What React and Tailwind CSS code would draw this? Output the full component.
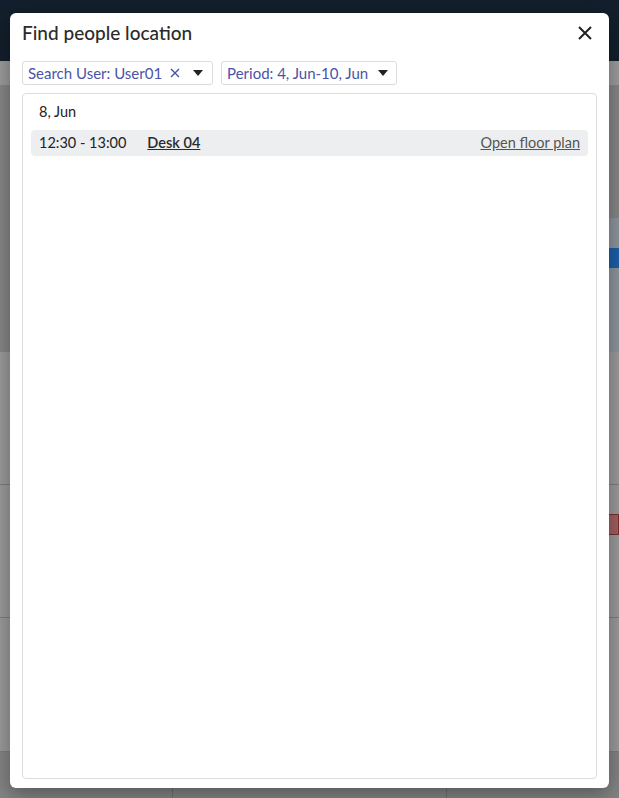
import React from "react";

function Caret() {
  return (
    <svg className="w-[10px] h-[6px]" viewBox="0 0 10 6">
      <path d="M0 0h10L5 6z" fill="#222" />
    </svg>
  );
}

function Chip({ label, clearable }) {
  return (
    <div className="flex items-center h-[24px] pl-[5px] pr-[4px] border border-[#dcdcdc] rounded-[3px] bg-white">
      <span className="text-[15px] text-[#4b53a8] leading-none">{label}</span>
      {clearable && (
        <svg className="w-[10px] h-[10px] ml-[8px]" viewBox="0 0 10 10" fill="none" stroke="#4b53a8" strokeWidth="1.4">
          <path d="M1 1l8 8M9 1L1 9" />
        </svg>
      )}
      <span className={clearable ? "ml-[13px] mr-[5px]" : "ml-[10px] mr-[4px]"}>
        <Caret />
      </span>
    </div>
  );
}

export default function App() {
  return (
    <div className="relative w-[619px] h-[798px] overflow-hidden font-['Lato','Open_Sans',sans-serif]">
      {/* page behind the overlay */}
      <div className="flex flex-col h-full">
        <div className="h-[61px] bg-[#131f2c]" />
        <div className="h-[24px] bg-[#9b9b9b]" />
        <div className="h-[267px] flex">
          <div className="flex-1 bg-[#858585]" />
          <div className="w-[20px] flex flex-col">
            <div className="h-[133px] bg-[#858585]" />
            <div className="h-[30px] bg-[#8c939a]" />
            <div className="h-[20px] bg-[#1b5ea6]" />
            <div className="flex-1 bg-[#8c939a]" />
          </div>
        </div>
        <div className="h-[133px] bg-[#9a9a9a] border-b border-[#7c7c7c]" />
        <div className="h-[133px] bg-[#9a9a9a] border-b border-[#7c7c7c] flex flex-col items-end pt-[29px]">
          <div className="w-[20px] h-[21px] bg-[#a05e5e] border border-[#7a2c2c]" />
        </div>
        <div className="h-[134px] bg-[#9a9a9a] border-b border-[#7c7c7c]" />
        <div className="flex-1 bg-[#838383] flex">
          <div className="w-[173px] border-r border-[#6f6f6f]" />
          <div className="w-[274px] border-r border-[#6f6f6f]" />
          <div className="flex-1" />
        </div>
      </div>

      {/* modal */}
      <div className="absolute left-[10px] top-[13px] w-[599px] h-[775px] bg-white rounded-[6px] shadow-[0_6px_20px_rgba(0,0,0,0.35)] flex flex-col px-[12px] pb-[9px]">
        <div className="flex items-center justify-between h-[40px]">
          <h1 className="text-[19px] font-medium text-[#2b2b2b]">Find people location</h1>
          <button className="mr-[5px]">
            <svg className="w-[14px] h-[14px]" viewBox="0 0 14 14" fill="none" stroke="#222" strokeWidth="2">
              <path d="M1 1l12 12M13 1L1 13" />
            </svg>
          </button>
        </div>
        <div className="flex gap-[8px] mt-[8px]">
          <Chip label="Search User: User01" clearable />
          <Chip label="Period: 4, Jun-10, Jun" />
        </div>
        <div className="flex-1 mt-[8px] border border-[#dddddd] rounded-[4px] px-[8px] pt-[9px]">
          <div className="px-[8px] text-[14.5px] text-[#222] leading-[18px]">8, Jun</div>
          <div className="mt-[9px] h-[26px] bg-[#eceef0] rounded-[4px] flex items-center px-[8px] text-[14.5px] text-[#222]">
            <span>12:30 - 13:00</span>
            <span className="ml-[21px] underline font-semibold text-[#2a2a2a]">Desk 04</span>
            <span className="ml-auto underline text-[#555]">Open floor plan</span>
          </div>
        </div>
      </div>
    </div>
  );
}
